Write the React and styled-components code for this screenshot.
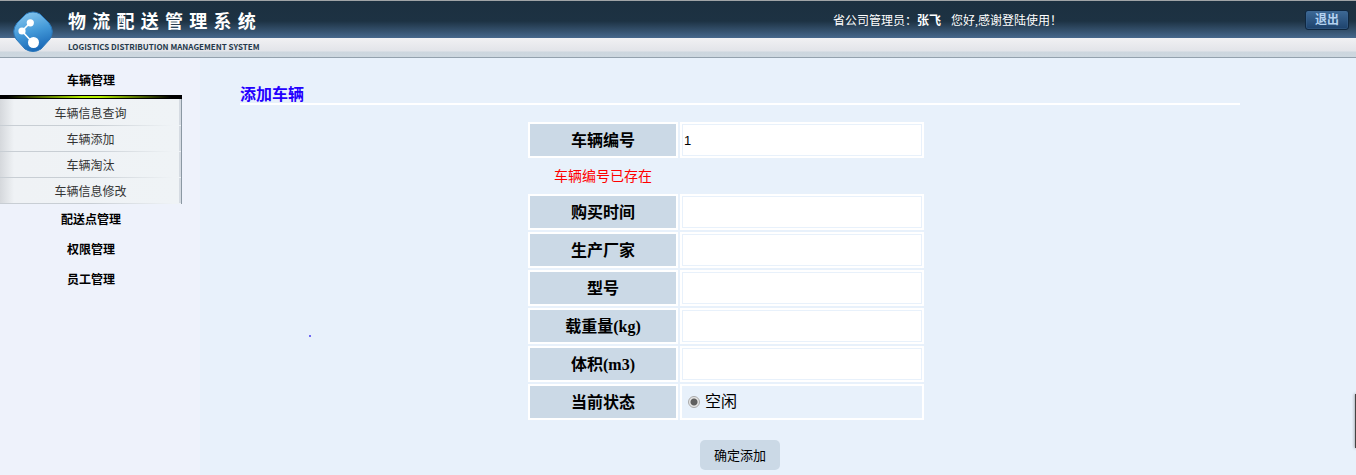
import React, { useState } from "react";
import styled, { createGlobalStyle } from "styled-components";

const MENU = [
  {
    title: "车辆管理",
    items: ["车辆信息查询", "车辆添加", "车辆淘汰", "车辆信息修改"],
  },
  { title: "配送点管理", items: [] },
  { title: "权限管理", items: [] },
  { title: "员工管理", items: [] },
];

const FIELDS = [
  { name: "number", label: "车辆编号", error: "车辆编号已存在" },
  { name: "bought", label: "购买时间" },
  { name: "maker", label: "生产厂家" },
  { name: "model", label: "型号" },
  { name: "load", label: "载重量(kg)" },
  { name: "volume", label: "体积(m3)" },
];

function Logo() {
  return (
    <LogoSvg viewBox='0 0 42 42' aria-hidden='true'>
      <defs>
        <linearGradient id='logo-fill' x1='0.3' y1='0' x2='0.6' y2='1'>
          <stop offset='0' stopColor='#86c6ee' />
          <stop offset='0.5' stopColor='#4399d8' />
          <stop offset='1' stopColor='#1765b4' />
        </linearGradient>
      </defs>
      <path
        d='M14 3 Q21 -1 28 3 L37 12 Q43 20 38 28 L29 38 Q21 43 13 38 L4 28 Q-1 20 5 12 Z'
        fill='url(#logo-fill)'
        stroke='#2a78bb'
        strokeWidth='1'
      />
      <path d='M18 12 L10 20 L21 32' fill='none' stroke='#fff' strokeWidth='1.6' />
      <circle cx='18.3' cy='11.8' r='3.6' fill='#fff' />
      <circle cx='10' cy='20' r='3.6' fill='#fff' />
      <circle cx='21.5' cy='31.5' r='5.5' fill='#fff' />
    </LogoSvg>
  );
}

function Header() {
  return (
    <StyledHeader>
      <Brand>
        <Logo />
        <div>
          <Title>物 流 配 送 管 理 系 统</Title>
          <Subtitle>LOGISTICS DISTRIBUTION MANAGEMENT SYSTEM</Subtitle>
        </div>
      </Brand>
      <Greeting>
        <span>
          省公司管理员：<b>张飞</b>
        </span>
        <span>您好,感谢登陆使用！</span>
      </Greeting>
      <Logout type='button'>退出</Logout>
    </StyledHeader>
  );
}

function Sidebar() {
  const [open, setOpen] = useState("车辆管理");

  return (
    <StyledSidebar>
      {MENU.map(({ title, items }) => (
        <React.Fragment key={title}>
          <MenuHeading
            type='button'
            aria-expanded={open === title}
            onClick={() => setOpen(title)}
          >
            {title}
          </MenuHeading>
          {open === title && items.length > 0 && (
            <Submenu>
              {items.map((item) => (
                <li key={item}>
                  <a href='#vehicles'>{item}</a>
                </li>
              ))}
            </Submenu>
          )}
        </React.Fragment>
      ))}
    </StyledSidebar>
  );
}

export default function App() {
  const [values, setValues] = useState({ number: "1" });

  const onChange = (e) =>
    setValues({ ...values, [e.target.name]: e.target.value });

  return (
    <>
      <GlobalStyle />
      <Page>
        <Header />
        <Body>
          <Sidebar />
          <Content>
            <Heading>添加车辆</Heading>
            <form onSubmit={(e) => e.preventDefault()}>
              <Rows>
                {FIELDS.map(({ name, label, error }) => (
                  <React.Fragment key={name}>
                    <LabelCell as='label' htmlFor={name}>
                      {label}
                    </LabelCell>
                    <Cell>
                      <input
                        id={name}
                        name={name}
                        type='text'
                        value={values[name] || ""}
                        onChange={onChange}
                      />
                    </Cell>
                    {error && <ErrorText>{error}</ErrorText>}
                  </React.Fragment>
                ))}
                <LabelCell id='status'>当前状态</LabelCell>
                <Cell role='radiogroup' aria-labelledby='status'>
                  <RadioLabel>
                    <Radio type='radio' name='status' defaultChecked />
                    空闲
                  </RadioLabel>
                </Cell>
              </Rows>
              <Submit type='submit'>确定添加</Submit>
            </form>
          </Content>
        </Body>
        <Speck />
        <EdgeTab />
      </Page>
    </>
  );
}

const GlobalStyle = createGlobalStyle`
  *,
  *::before {
    box-sizing: border-box;
  }

  body {
    margin: 0;
    font-family: "Liberation Serif", "Noto Sans CJK SC", serif;
    background: #e8f1fb;
  }

  button,
  input {
    font-family: inherit;
  }
`;

const Page = styled.div`
  position: relative;
  display: flex;
  flex-direction: column;
  min-height: 100vh;
`;

const StyledHeader = styled.header`
  display: grid;
  grid-template-columns: 833fr 472fr auto;
  align-items: start;
  padding-right: 7px;
  border-top: 1px solid #a0a4a6;
  border-bottom: 1px solid #93a1ad;
  background: linear-gradient(
    #1c3040 0,
    #1d3243 20px,
    #46688c 37px,
    #f1f1f3 37px,
    #e2e4e9 50px,
    #ccd6de 51px,
    #cdd7df 100%
  );
`;

const Brand = styled.div`
  display: flex;
  align-items: center;
  gap: 14px;
  padding-left: 12px;
`;

const LogoSvg = styled.svg`
  width: 42px;
  height: 42px;
  margin-top: 6px;
`;

const Title = styled.h1`
  height: 37px;
  margin: 0;
  font: bold 18px/42px "DejaVu Sans", "Noto Sans CJK SC", sans-serif;
  color: #fff;
  white-space: nowrap;
`;

const Subtitle = styled.div`
  height: 19px;
  font: bold 8px/17px "Noto Sans CJK SC", sans-serif;
  color: #25384a;
  white-space: nowrap;
`;

const Greeting = styled.div`
  display: flex;
  gap: 10px;
  font-size: 12px;
  line-height: 40px;
  color: #fff;
  white-space: nowrap;
`;

const Logout = styled.button`
  width: 44px;
  height: 20px;
  margin-top: 9px;
  padding: 0;
  border: 1px solid #0f2740;
  border-radius: 3px;
  background: linear-gradient(#3d6996, #1d426c);
  box-shadow: inset 0 0 0 1px #41699066;
  color: #b4d2f0;
  font-size: 12px;
  font-weight: bold;
  line-height: 16px;
  cursor: pointer;
`;

const Body = styled.div`
  flex: 1;
  display: grid;
  grid-template-columns: 200px 1fr;
`;

const StyledSidebar = styled.nav`
  display: flex;
  flex-direction: column;
  align-items: flex-start;
  padding: 7px 18px 0 0;
  background: #eef2fb;
`;

const MenuHeading = styled.button`
  width: 100%;
  height: 30px;
  padding: 0;
  border: none;
  background: none;
  color: #000;
  font-size: 12px;
  font-weight: bold;
  cursor: pointer;
`;

const Submenu = styled.ul`
  width: 100%;
  margin: 0;
  padding: 0;
  list-style: none;
  background: linear-gradient(90deg, #d5d8dc 0, #eff2f5 14px, #eff3f6 100%);
  border-right: 1px solid #8b98a3;
  box-shadow: inset -2px 0 0 #d5dbe2;

  &::before {
    content: "";
    display: block;
    height: 4px;
    margin: 0 -1px 1px 0;
    border: solid #000;
    border-width: 1px 0;
    background: linear-gradient(90deg, #000 4%, #b4ee00 45% 55%, #000 94%);
  }

  li {
    height: 26px;
    border-bottom: 1px solid;
    border-image: linear-gradient(90deg, #c8ced4 50%, #eff3f6 95%) 1;
  }

  a {
    display: block;
    height: 25px;
    color: #333;
    font-size: 12px;
    line-height: 28px;
    text-align: center;
    text-decoration: none;

    &:hover {
      color: #2400ff;
    }
  }
`;

const Content = styled.main`
  padding: 27px 116px 5px 40px;
`;

const Heading = styled.h2`
  height: 20px;
  margin: 0 0 17px;
  border-bottom: 2px solid #fff;
  color: #2400ff;
  font-size: 16px;
  line-height: 20px;
`;

const Rows = styled.div`
  display: grid;
  grid-template-columns: 150px 244px;
  justify-content: center;
  gap: 2px;
  padding-right: 28px;
`;

const LabelCell = styled.div`
  height: 36px;
  border: 2px solid #fff;
  background: #cbd9e6;
  font-size: 16px;
  font-weight: bold;
  line-height: 34px;
  text-align: center;
`;

const Cell = styled.div`
  height: 36px;
  border: 2px solid #fff;

  input[type="text"] {
    display: block;
    width: 100%;
    height: 32px;
    padding: 0 1px;
    border: 1px solid #e8f1fb;
    background: #fff;
    font-family: "Liberation Sans", "Noto Sans CJK SC", sans-serif;
    font-size: 13px;
  }
`;

const ErrorText = styled.div`
  grid-column: 1 / 2;
  height: 32px;
  color: #f00;
  font-size: 14px;
  line-height: 34px;
  text-align: center;

  & + * {
    grid-column: 1 / 2;
  }
`;

const RadioLabel = styled.label`
  display: flex;
  align-items: center;
  gap: 5px;
  height: 32px;
  padding-left: 6px;
  font-size: 16px;
  line-height: 32px;
`;

const Radio = styled.input`
  appearance: none;
  width: 12px;
  height: 12px;
  margin: 0;
  border: 1px solid #a9a9a9;
  border-radius: 50%;
  background: #e6e6e6;

  &:checked {
    background: radial-gradient(circle, #606060 3px, #e6e6e6 4px);
  }
`;

const Submit = styled.button`
  display: block;
  width: 80px;
  height: 30px;
  margin: 20px auto 0;
  padding: 0 0 2px;
  border: none;
  border-radius: 5px;
  background: #cbd9e6;
  color: #000;
  font-size: 13px;
  cursor: pointer;
`;

const Speck = styled.span`
  position: absolute;
  top: 335px;
  left: 309px;
  width: 2px;
  height: 2px;
  border-radius: 1px;
  background: #4a3cf0;
`;

const EdgeTab = styled.span`
  position: absolute;
  top: 394px;
  right: 0;
  width: 1px;
  height: 54px;
  background: #444;
  box-shadow: 0 0 3px #333;
`;
